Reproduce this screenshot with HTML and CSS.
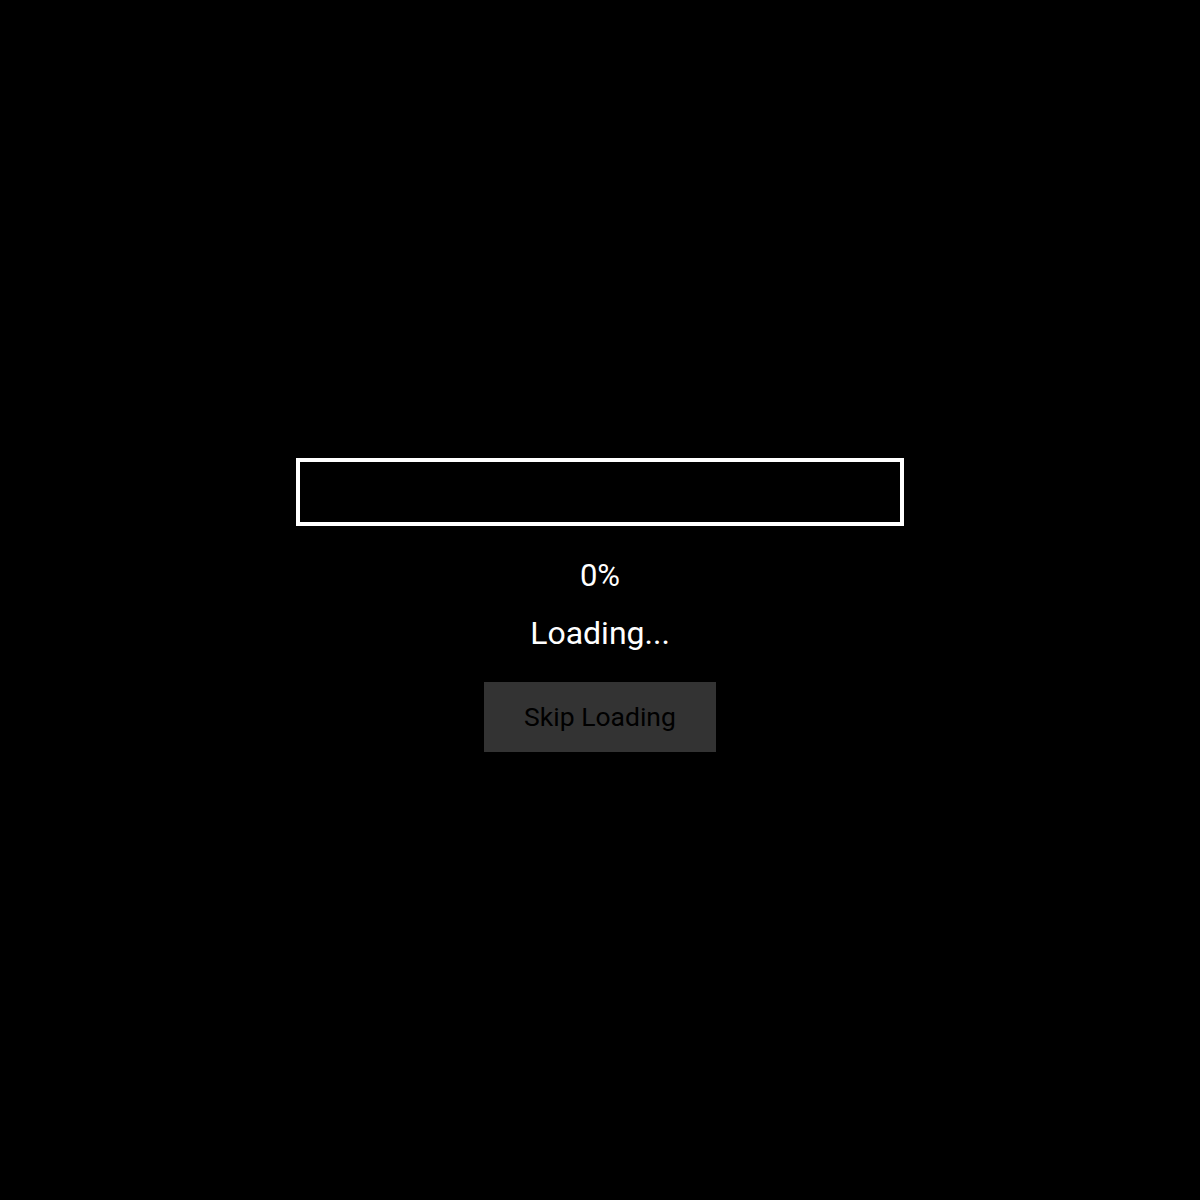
FILE: index.html
```html
<!DOCTYPE html>
<html>
<head>
<meta charset="utf-8">
<link rel="stylesheet" href="styles.css">
</head>
<body>
<div class="screen">
  <div class="loader">
    <div class="bar"><div class="fill"></div></div>
    <div class="percent">0%</div>
    <div class="status">Loading...</div>
    <button class="skip">Skip Loading</button>
  </div>
</div>
</body>
</html>
```
FILE: styles.css
```css
html, body {
  margin: 0;
  padding: 0;
  background: #000;
}
.screen {
  width: 1200px;
  height: 1200px;
  display: flex;
  align-items: center;
  justify-content: center;
  font-family: Roboto, "Liberation Sans", sans-serif;
}
.loader {
  display: flex;
  flex-direction: column;
  align-items: center;
  margin-top: 9px;
}
.bar {
  width: 600px;
  height: 60px;
  border: 4px solid #fff;
}
.fill {
  width: 0;
  height: 100%;
  background: #fff;
}
.percent {
  color: #fff;
  font-size: 31px;
  line-height: 36px;
  margin-top: 32px;
}
.status {
  color: #fff;
  font-size: 32px;
  line-height: 38px;
  margin-top: 20px;
}
.skip {
  margin-top: 30px;
  background: #333;
  color: #000;
  border: none;
  font-family: Roboto, "Liberation Sans", sans-serif;
  font-size: 26.5px;
  white-space: nowrap;
  padding: 0;
  width: 232px;
  height: 70px;
}
```
